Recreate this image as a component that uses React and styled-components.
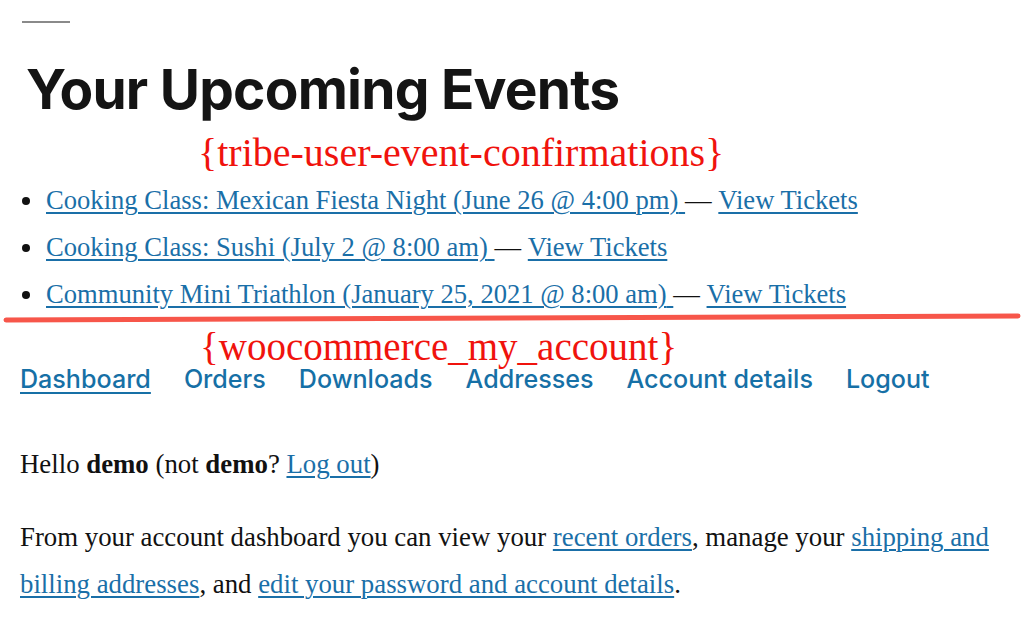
import React from 'react';
import styled, { createGlobalStyle } from 'styled-components';

const GlobalStyle = createGlobalStyle`
  html, body {
    margin: 0;
    padding: 0;
    background: #fff;
  }
  body {
    font-family: "Liberation Serif", serif;
    color: #111;
  }
`;

const Page = styled.div`
  width: 1024px;
  height: 636px;
  overflow: hidden;
  background: #fff;
  display: flex;
  flex-direction: column;
`;

const Rule = styled.hr`
  width: 48px;
  height: 2px;
  border: 0;
  background: #8a8a8a;
  margin: 21px 0 0 22px;
`;

const Heading = styled.h1`
  font-family: Inter, "Liberation Sans", sans-serif;
  font-weight: 700;
  font-size: 55px;
  letter-spacing: -0.014em;
  line-height: 1;
  color: #141414;
  margin: 39px 0 0 26px;
`;

const Shortcode = styled.div`
  font-family: "Liberation Serif", serif;
  font-size: ${(p) => p.$size}px;
  line-height: 1;
  color: #f0130d;
  margin: ${(p) => p.$top}px 0 0 ${(p) => p.$left}px;
`;

const EventList = styled.ul`
  list-style: none;
  margin: 12px 0 0 0;
  padding: 0 0 0 22px;
  display: flex;
  flex-direction: column;
  gap: 17px;
`;

const EventItem = styled.li`
  display: flex;
  align-items: baseline;
  font-size: 26.6px;
  line-height: 30px;
  &::before {
    content: '';
    width: 8px;
    height: 8px;
    border-radius: 50%;
    background: #111;
    margin-right: 16px;
    align-self: center;
    position: relative;
    top: 1px;
  }
`;

const Link = styled.a`
  color: #1a6fa8;
  text-decoration: underline;
  text-decoration-thickness: 2px;
  text-underline-offset: 3px;
  cursor: pointer;
`;

const Dash = styled.span`
  white-space: pre;
  color: #111;
`;

const Annotation = styled.svg`
  display: block;
  margin-top: 4px;
`;

const Nav = styled.nav`
  display: flex;
  gap: 33px;
  margin: -2px 0 0 20px;
  font-family: Inter, "Liberation Sans", sans-serif;
  font-weight: 500;
  font-size: 25.1px;
  line-height: 30px;
`;

const NavLink = styled.a`
  color: #1670a6;
  text-decoration: ${(p) => (p.$active ? 'underline' : 'none')};
  text-decoration-thickness: 2px;
  text-underline-offset: 4px;
`;

const Para = styled.p`
  font-size: 26.8px;
  line-height: 47px;
  margin: ${(p) => p.$top}px 14px 0 20px;
  b {
    font-weight: 700;
  }
`;

const events = [
  'Cooking Class: Mexican Fiesta Night (June 26 @ 4:00 pm)',
  'Cooking Class: Sushi (July 2 @ 8:00 am)',
  'Community Mini Triathlon (January 25, 2021 @ 8:00 am)',
];

const navItems = ['Dashboard', 'Orders', 'Downloads', 'Addresses', 'Account details', 'Logout'];

export default function App() {
  return (
    <Page>
      <GlobalStyle />
      <Rule />
      <Heading>Your Upcoming Events</Heading>
      <Shortcode $size={40} $top={16} $left={198}>{'{tribe-user-event-confirmations}'}</Shortcode>
      <EventList>
        {events.map((e) => (
          <EventItem key={e}>
            <Link>{e}&nbsp;</Link>
            <Dash>— </Dash>
            <Link>View Tickets</Link>
          </EventItem>
        ))}
      </EventList>
      <Annotation width="1024" height="10" viewBox="0 0 1024 10">
        <path d="M6 7 Q 500 5 1018 3" stroke="#f7564a" strokeWidth="5" strokeLinecap="round" fill="none" />
      </Annotation>
      <Shortcode $size={39} $top={4} $left={200}>{'{woocommerce_my_account}'}</Shortcode>
      <Nav>
        {navItems.map((n, i) => (
          <NavLink key={n} $active={i === 0}>{n}</NavLink>
        ))}
      </Nav>
      <Para $top={47}>
        Hello <b>demo</b> (not <b>demo</b>? <Link>Log out</Link>)
      </Para>
      <Para $top={26}>
        From your account dashboard you can view your <Link>recent orders</Link>, manage your{' '}
        <Link>shipping and billing addresses</Link>, and <Link>edit your password and account details</Link>.
      </Para>
    </Page>
  );
}
